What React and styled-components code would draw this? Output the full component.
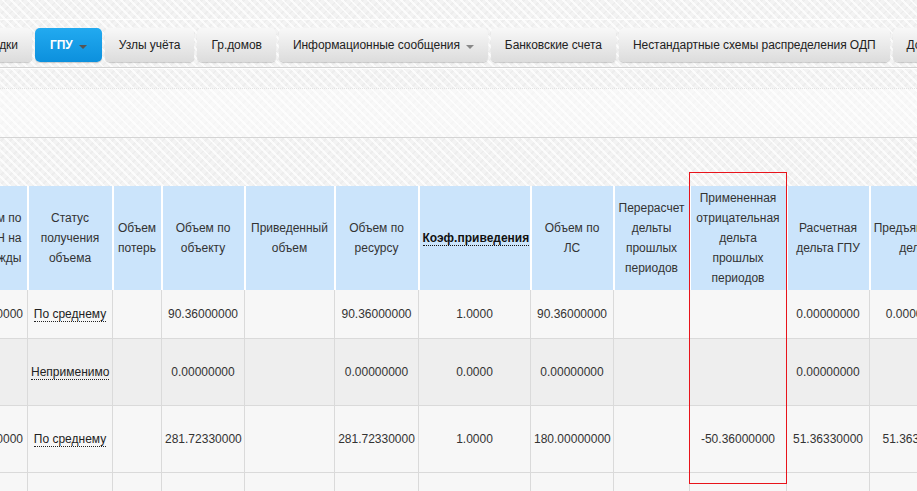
import React from 'react';
import styled, { createGlobalStyle } from 'styled-components';

const GlobalStyle = createGlobalStyle`
  html, body {
    margin: 0;
    padding: 0;
  }
  body {
    font-family: "Liberation Sans", Arial, sans-serif;
    font-size: 12px;
    color: #333;
    background-color: #f3f3f3;
    background-image:
      repeating-linear-gradient(45deg, rgba(255,255,255,0.75) 0 2px, transparent 2px 6px),
      repeating-linear-gradient(-45deg, rgba(0,0,0,0.025) 0 2px, transparent 2px 6px);
    overflow: hidden;
  }
`;

const Page = styled.div`
  position: relative;
  width: 917px;
  height: 491px;
  overflow: hidden;
`;

const TopStrip = styled.div`
  height: 20px;
`;

const NavBar = styled.div`
  display: flex;
  flex-flow: row nowrap;
  gap: 3px;
  padding: 8px 0 5px 0;
  margin-left: -36px;
  border-top: 1px solid rgba(255, 255, 255, 0.8);
  border-bottom: 1px solid #d2d2d2;
  box-shadow: 0 1px 0 rgba(255, 255, 255, 0.9);
  height: 34px;
  margin-top: -1px;
`;

const NavButton = styled.div`
  flex: 0 0 auto;
  display: flex;
  align-items: center;
  gap: 6px;
  height: 34px;
  padding: 0 ${p => (p.$active ? 15 : 14)}px;
  border-radius: 5px;
  white-space: nowrap;
  font-size: 12px;
  letter-spacing: -0.05px;
  color: ${p => (p.$active ? '#fff' : '#222')};
  font-weight: ${p => (p.$active ? 'bold' : 'normal')};
  background: ${p =>
    p.$active
      ? 'linear-gradient(#22aaf0, #0c90dd)'
      : 'linear-gradient(#f8f8f8, #dcdcdc)'};
  box-shadow: 0 1px 1px rgba(0, 0, 0, 0.18);
`;

const Caret = styled.span`
  display: inline-block;
  width: 0;
  height: 0;
  margin-top: 3px;
  border-left: 4px solid transparent;
  border-right: 4px solid transparent;
  border-top: 4px solid ${p => (p.$dark ? '#555' : '#888')};
`;

const Gap = styled.div`
  height: ${p => p.$h}px;
`;

const Panel = styled.div`
  height: 48px;
  background: rgba(255, 255, 255, 0.45);
  border-top: 1px dotted #e2e2e2;
  border-bottom: 1px solid #d4d4d4;
`;

const TableWrap = styled.div`
  overflow: hidden;
  width: 917px;
`;

const Table = styled.table`
  margin-left: -58px;
  border-collapse: collapse;
  table-layout: fixed;
  width: 1023px;
`;

const Th = styled.th`
  background: #cbe4fb;
  border-left: 2px solid #fff;
  font-weight: normal;
  font-size: 12px;
  line-height: 20px;
  color: #333;
  text-align: ${p => p.$align || 'center'};
  vertical-align: middle;
  padding: 2px 3px;
  height: 102px;
  box-sizing: border-box;
  &:first-child {
    border-left: none;
    padding-right: 5px;
  }
`;

const SortLink = styled.span`
  font-weight: bold;
  color: #111;
  border-bottom: 1px dotted #111;
`;

const Tr = styled.tr`
  background: ${p => (p.$shade ? '#eeeeee' : '#f7f7f7')};
  height: ${p => p.$h}px;
`;

const Td = styled.td`
  border: 1px solid #dadada;
  border-top: none;
  text-align: ${p => p.$align || 'center'};
  vertical-align: middle;
  white-space: nowrap;
  overflow: hidden;
  font-size: 12px;
  color: #333;
  padding: 0 3px;
  &:first-child {
    padding-right: 4px;
  }
`;

const StatusLink = styled.span`
  color: #222;
  border-bottom: 1px dotted #222;
`;

const Highlight = styled.div`
  position: absolute;
  left: 689px;
  top: 172px;
  width: 96px;
  height: 310px;
  border: 1px solid #e8141b;
  pointer-events: none;
`;

const widths = [85, 85, 49, 83, 90, 84, 112, 83, 76, 97, 83, 96];

const headers = [
  <>Объем по<br />ОДН на<br />нужды</>,
  <>Статус<br />получения<br />объема</>,
  <>Объем<br />потерь</>,
  <>Объем по<br />объекту</>,
  <>Приведенный<br />объем</>,
  <>Объем по<br />ресурсу</>,
  <SortLink>Коэф.приведения</SortLink>,
  <>Объем по<br />ЛС</>,
  <>Перерасчет<br />дельты<br />прошлых<br />периодов</>,
  <>Примененная<br />отрицательная<br />дельта<br />прошлых<br />периодов</>,
  <>Расчетная<br />дельта ГПУ</>,
  <>Предъявленная<br />дельта</>,
];

const rows = [
  {
    h: 48,
    cells: ['90.36000000', 'По среднему', '', '90.36000000', '', '90.36000000', '1.0000', '90.36000000', '', '', '0.00000000', '0.00000000'],
  },
  {
    h: 67,
    shade: true,
    cells: ['', 'Неприменимо', '', '0.00000000', '', '0.00000000', '0.0000', '0.00000000', '', '', '0.00000000', ''],
  },
  {
    h: 67,
    cells: ['281.72330000', 'По среднему', '', '281.72330000', '', '281.72330000', '1.0000', '180.00000000', '', '-50.36000000', '51.36330000', '51.36330000'],
  },
  {
    h: 40,
    cells: ['', '', '', '', '', '', '', '', '', '', '', ''],
  },
];

const App = () => (
  <Page>
    <GlobalStyle />
    <TopStrip />
    <NavBar>
      <NavButton>Сводки</NavButton>
      <NavButton $active>ГПУ <Caret $dark /></NavButton>
      <NavButton>Узлы учёта</NavButton>
      <NavButton>Гр.домов</NavButton>
      <NavButton>Информационные сообщения <Caret /></NavButton>
      <NavButton>Банковские счета</NavButton>
      <NavButton>Нестандартные схемы распределения ОДП</NavButton>
      <NavButton>Дополнительно</NavButton>
    </NavBar>
    <Gap $h={20} />
    <Panel />
    <Gap $h={48} />
    <TableWrap>
      <Table>
        <colgroup>
          {widths.map((w, i) => <col key={i} style={{ width: w }} />)}
        </colgroup>
        <thead>
          <tr>
            {headers.map((h, i) => (
              <Th key={i} $align={i === 0 ? 'right' : undefined}>{h}</Th>
            ))}
          </tr>
        </thead>
        <tbody>
          {rows.map((r, i) => (
            <Tr key={i} $h={r.h} $shade={r.shade}>
              {r.cells.map((c, j) => (
                <Td key={j} $align={j === 0 ? 'right' : undefined}>
                  {j === 1 && c ? <StatusLink>{c}</StatusLink> : c}
                </Td>
              ))}
            </Tr>
          ))}
        </tbody>
      </Table>
    </TableWrap>
    <Highlight />
  </Page>
);

export default App;
